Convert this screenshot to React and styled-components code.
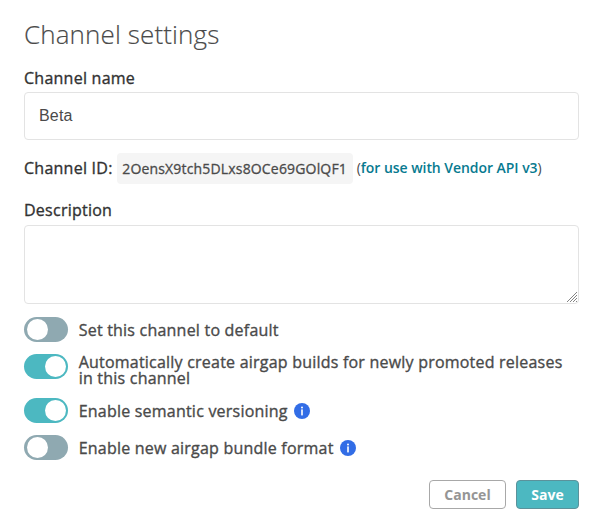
import React, { useState } from "react";
import styled, { createGlobalStyle } from "styled-components";

const GlobalStyle = createGlobalStyle`
  * { box-sizing: border-box; }
  body { margin: 0; background: #fff; font-family: "Open Sans", sans-serif; color: #4a4a4a; }
`;

const Form = styled.form`
  display: flex;
  flex-direction: column;
  width: 600px;
  height: 530px;
  padding: 16px 21px 0 24px;
  overflow: hidden;
`;

const Title = styled.h1`
  margin: 0;
  height: 36px;
  font-size: 26px;
  font-weight: 300;
  line-height: 36px;
  letter-spacing: 0.12px;
  -webkit-text-stroke: 0.15px currentColor;
`;

const Label = styled.label`
  font-size: 16px;
  font-weight: 500;
  line-height: 20px;
  color: #323232;
  letter-spacing: 0.25px;
  -webkit-text-stroke: 0.35px currentColor;
  margin-top: ${(p) => p.$top || "0"};
`;

const NameInput = styled.input`
  width: 100%;
  height: 48px;
  margin: 4px 0 0;
  padding: 0 14px;
  border: 1px solid #e3e3e3;
  border-radius: 4px;
  outline: none;
  background: #fff;
  font: 400 16px "Liberation Sans", sans-serif;
  letter-spacing: 0.2px;
  color: #4a4a4a;
`;

const IdRow = styled.div`
  display: flex;
  align-items: center;
  height: 32px;
  margin-top: 12px;
`;

const IdValue = styled.code`
  display: flex;
  align-items: center;
  width: 236px;
  height: 31px;
  margin: 0 3.5px 0 4.6px;
  padding-left: 5px;
  border-radius: 4px;
  background: #f5f5f5;
  font: 500 14px "Open Sans", sans-serif;
  letter-spacing: 0.17px;
  -webkit-text-stroke: 0.3px currentColor;
  white-space: nowrap;
`;

const IdNote = styled.span`
  font-size: 14px;
  line-height: 20px;
  white-space: nowrap;
`;

const ApiLink = styled.a`
  color: #077a90;
  font-weight: 600;
  letter-spacing: -0.05px;
  text-decoration: none;
`;

const DescriptionBox = styled.div`
  position: relative;
  height: 79px;
  margin-top: 5px;
`;

const Description = styled.textarea`
  display: block;
  width: 100%;
  height: 100%;
  padding: 12px 15px;
  border: 1px solid #e3e3e3;
  border-radius: 4px;
  outline: none;
  background: #fff;
  resize: none;
  font: 400 16px "Liberation Sans", sans-serif;
`;

const Grip = styled.svg`
  position: absolute;
  right: 1px;
  bottom: 1px;
  width: 12px;
  height: 12px;
  pointer-events: none;
`;

const Options = styled.div`
  display: flex;
  flex-direction: column;
  gap: 12px;
  margin-top: 13px;
`;

const OptionRow = styled.div`
  display: flex;
  align-items: flex-start;
  height: ${(p) => (p.$tall ? "32px" : "25px")};
`;

const Track = styled.button`
  display: flex;
  flex: none;
  align-items: center;
  justify-content: ${(p) => (p.$on ? "flex-end" : "flex-start")};
  width: 44px;
  height: 25px;
  padding: 0 2px 0 3px;
  border: 0;
  border-radius: 13px;
  background: ${(p) => (p.$on ? "#4cb8c1" : "#8fa9b1")};
`;

const Thumb = styled.span`
  width: 21px;
  height: 21px;
  border-radius: 50%;
  background: #fff;
`;

const OptionText = styled.span`
  margin-left: 10.7px;
  padding-top: ${(p) => (p.$tall ? "0" : "5px")};
  font-size: 16px;
  font-weight: 500;
  line-height: 16px;
  white-space: pre;
  letter-spacing: 0.215px;
  -webkit-text-stroke: 0.35px currentColor;
`;

const InfoIcon = styled.svg`
  width: 16px;
  height: 16px;
  margin: 4.5px 0 0 6px;
  flex: none;
`;

const Actions = styled.div`
  display: flex;
  justify-content: flex-end;
  gap: 10px;
  margin-top: 20px;
`;

const Button = styled.button`
  width: ${(p) => (p.$primary ? "63px" : "77px")};
  height: 29px;
  padding: 0;
  border: 1px solid ${(p) => (p.$primary ? "#5b929b" : "#a8a8a8")};
  border-radius: 4px;
  background: ${(p) => (p.$primary ? "#4cb8c1" : "#fff")};
  color: ${(p) => (p.$primary ? "#fff" : "#959595")};
  font: 700 14px/20px "Open Sans", sans-serif;
`;

function Info() {
  return (
    <InfoIcon viewBox="0 0 16 16" role="img" aria-label="More information">
      <circle cx="8" cy="8" r="8" fill="#326de6" />
      <circle cx="8" cy="4.4" r="1" fill="#fff" />
      <rect x="7.2" y="6.4" width="1.6" height="6" fill="#fff" />
    </InfoIcon>
  );
}

function Option({ text, initial = false, info = false, tall = false }) {
  const [on, setOn] = useState(initial);
  return (
    <OptionRow $tall={tall}>
      <Track type="button" role="switch" aria-checked={on} aria-label={text} $on={on} onClick={() => setOn(!on)}>
        <Thumb />
      </Track>
      <OptionText $tall={tall}>{text}</OptionText>
      {info && <Info />}
    </OptionRow>
  );
}

export default function App() {
  return (
    <>
      <GlobalStyle />
      <Form onSubmit={(e) => e.preventDefault()}>
        <Title>Channel settings</Title>
        <Label htmlFor="name" $top="16px">Channel name</Label>
        <NameInput id="name" defaultValue="Beta" />
        <IdRow>
          <Label as="span">Channel ID:</Label>
          <IdValue>2OensX9tch5DLxs8OCe69GOlQF1</IdValue>
          <IdNote>(<ApiLink>for use with Vendor API v3</ApiLink>)</IdNote>
        </IdRow>
        <Label htmlFor="description" $top="16px">Description</Label>
        <DescriptionBox>
          <Description id="description" />
          <Grip viewBox="0 0 12 12" aria-hidden="true">
            <path d="M1 11 11 1M4 11l7-7M7 11l4-4M10 11l1-1" stroke="#777" strokeWidth="0.9" />
          </Grip>
        </DescriptionBox>
        <Options>
          <Option text="Set this channel to default" />
          <Option initial tall text={"Automatically create airgap builds for newly promoted releases\nin this channel"} />
          <Option initial info text="Enable semantic versioning" />
          <Option info text="Enable new airgap bundle format" />
        </Options>
        <Actions>
          <Button type="button">Cancel</Button>
          <Button type="submit" $primary>Save</Button>
        </Actions>
      </Form>
    </>
  );
}
